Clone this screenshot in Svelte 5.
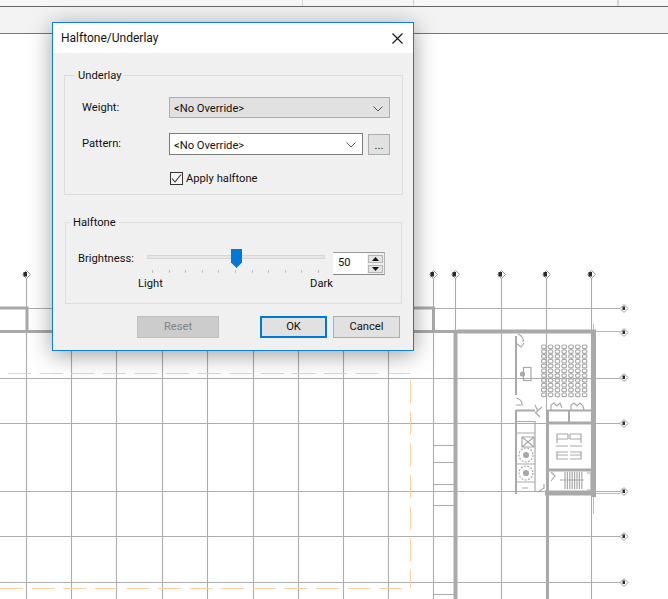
<script>
    // Plan behind the dialog
    const gridX = [26, 71, 116, 162, 207, 253, 298, 343, 388, 433, 455, 501, 546, 591]
    const gridY = [308, 378, 423, 491, 536, 582]
    const topMarks = [26, 433, 455, 501, 546, 591]
    const rightMarks = [308, 332, 377, 423, 491, 536, 582]
    const stairLines = [445, 462, 484, 505, 594]
    const seatCols = [0, 1, 2, 3, 4, 5, 6]
    const seatRows = [0, 1, 2, 3, 4, 5, 6, 7, 8, 9, 10]
    const treads = [0, 1, 2, 3, 4, 5, 6, 7]
    const ticks = Array.from({ length: 11 })
</script>

<div class="app">
    <div class="topbar">
        <div class="columns">
            <span class="col c1"></span>
            <span class="col c2"></span>
            <span class="col c3"></span>
            <span class="col"></span>
        </div>
    </div>

    <svg class="plan" width="668" height="565" viewBox="0 34 668 565" fill="none">
        <g stroke="#adadad" stroke-width="1.1">
            {#each gridX as x}
                <line x1={x + 0.5} y1="278" x2={x + 0.5} y2="599" />
            {/each}
            {#each gridY as y}
                <line x1="0" y1={y + 0.5} x2="620" y2={y + 0.5} />
            {/each}
            {#each stairLines as y}
                <line x1="434" y1={y + 0.5} x2="455" y2={y + 0.5} />
            {/each}
        </g>

        <g stroke="#ffcf9e" stroke-width="1">
            <line x1="8" y1="373.5" x2="410" y2="373.5" stroke-dasharray="23 8.6" />
            <line x1="410.5" y1="380" x2="410.5" y2="588" stroke-dasharray="23 8.6" />
            <line x1="0" y1="588.5" x2="410" y2="588.5" stroke-dasharray="23 8.6" />
        </g>

        <g stroke="#f4a3a3" stroke-width="1">
            <line x1="593" y1="331.5" x2="620" y2="331.5" />
            <line x1="593.5" y1="324" x2="593.5" y2="332" />
            <line x1="595" y1="493.5" x2="620" y2="493.5" />
            <line x1="593.5" y1="495" x2="593.5" y2="514" />
        </g>

        <!-- walls -->
        <g stroke="#a9a9a9">
            <path d="M0 308H27V331.5M0 331.5H458" stroke-width="3" />
            <path d="M414 308H433.5V331" stroke-width="3" />
            <path d="M457 331.5H596" stroke-width="4" />
            <line x1="455.5" y1="332" x2="455.5" y2="599" stroke-width="4" />
            <line x1="593.5" y1="331" x2="593.5" y2="497" stroke-width="5" />
            <line x1="547.5" y1="410" x2="547.5" y2="599" stroke-width="3" />
            <line x1="545" y1="493" x2="596" y2="493" stroke-width="5" />
            <path d="M516 336V395M516 410V494" stroke-width="2" />
            <path d="M516 410.5H535M546 410.5H592" stroke-width="2" />
            <line x1="569" y1="410" x2="569" y2="422" stroke-width="2" />
            <line x1="547" y1="423" x2="592" y2="423" stroke-width="3" />
            <line x1="547" y1="470" x2="592" y2="470" stroke-width="3" />
        </g>

        <!-- auditorium seats -->
        <g stroke="#a9a9a9" stroke-width="1.2">
            {#each seatCols as c}
                {#each seatRows as r}
                    <rect x={541.5 + c * 6.8} y={345 + r * 4.8} width="4.6" height="3.6" rx="1.6" />
                {/each}
            {/each}
            <rect x="523.5" y="367.5" width="7.5" height="13" />
            <circle cx="522.5" cy="374" r="2" fill="#a9a9a9" />
            <path d="M518 334c4 2 6 5 5 8M516 343l5 4 3-4M516 398c4 1 6 3 6 6M516 405h7" />
            <path d="M538 411l-3-6M535 413l7-6M540 417l-4-4" />
            <path d="M551 410l0-5 3-2 3 3 3-3 2 5M571 410l0-5 3-2 3 3 3-3 3 3 1 4" />
            <!-- tables -->
            <path d="M568 434H557V443M557 439H568M568 434V439M570 434H581V443M570 439H581M570 434V439" />
            <path d="M556 446H568M570 446H582M556 452H568M570 452H582" />
            <path d="M568 459H557V452M557 455H568M570 459H581V452M570 455H581" />
            <!-- core -->
            <path d="M516 421.5H535M516 433H535M522 437H534V447H522ZM522 437L534 447M534 437L522 447" />
            <circle cx="526" cy="455" r="7" stroke-dasharray="2 1.4" />
            <circle cx="526" cy="473" r="7" stroke-dasharray="2 1.4" />
            <circle cx="526" cy="455" r="2.5" fill="#a9a9a9" />
            <circle cx="526" cy="473" r="2.5" fill="#a9a9a9" />
            <path d="M516 464H535M516 482H535M535 421V492M538 492l6-4v-4M522 488h6" />
            <!-- stairs -->
            {#each treads as t}
                <line x1={565 + t * 2.4} y1="472" x2={565 + t * 2.4} y2="489" />
            {/each}
            <path d="M560 480H584M587 473H591V490H587M551 472l4 4-4 5" />
        </g>

        <!-- level and grid bubbles -->
        {#each topMarks as x}
            <polygon points="{x + 0.5},270.5 {x + 4.5},274.5 {x + 0.5},278.5 {x - 3.5},274.5" fill="#fff" stroke="#9a9a9a" />
            <rect x={x - 2.5} y="272" width="3.5" height="4.5" fill="#2a2a33" />
        {/each}
        {#each rightMarks as y}
            <polygon points="624,{y - 3.5} 628,{y + 0.5} 624,{y + 4.5} 620,{y + 0.5}" fill="#fff" stroke="#9a9a9a" />
            <rect x="622.5" y={y - 1.5} width="2.5" height="3.5" fill="#2a2a33" />
        {/each}
    </svg>

    <div class="dialog">
        <div class="titlebar">
            <span>Halftone/Underlay</span>
            <svg class="close" width="11" height="11" viewBox="0 0 11 11">
                <path d="M0.5 0.5L10.5 10.5M10.5 0.5L0.5 10.5" stroke="#111" stroke-width="1.1" fill="none" />
            </svg>
        </div>

        <div class="content">
            <div class="group underlay">
                <span class="legend">Underlay</span>
                <div class="row">
                    <span class="label">Weight:</span>
                    <div class="select disabled">
                        <span>&lt;No Override&gt;</span>
                        <svg width="10" height="6" viewBox="0 0 10 6"><path d="M0.5 0.5L5 5L9.5 0.5" /></svg>
                    </div>
                </div>
                <div class="row second">
                    <span class="label">Pattern:</span>
                    <div class="select open">
                        <span>&lt;No Override&gt;</span>
                        <svg width="10" height="6" viewBox="0 0 10 6"><path d="M0.5 0.5L5 5L9.5 0.5" /></svg>
                    </div>
                    <div class="dots">...</div>
                </div>
                <div class="check-row">
                    <span class="checkbox">
                        <svg width="11" height="11" viewBox="0 0 11 11"><path d="M1 5.5L4 9L10 1.5" /></svg>
                    </span>
                    <span class="check-text">Apply halftone</span>
                </div>
            </div>

            <div class="group halftone">
                <span class="legend">Halftone</span>
                <div class="bright-row">
                    <span class="bright-label">Brightness:</span>
                    <div class="slider">
                        <div class="track"></div>
                        <svg class="thumb" width="11" height="19" viewBox="0 0 11 19"><path d="M0 0H11V13.5L5.5 19L0 13.5Z" /></svg>
                        <div class="ticks">
                            {#each ticks as _}
                                <i></i>
                            {/each}
                        </div>
                    </div>
                    <div class="spin">
                        <span class="spin-value">50</span>
                        <div class="spin-btns">
                            <span class="arrow"><svg width="7" height="4" viewBox="0 0 7 4"><path d="M3.5 0L7 4H0Z" /></svg></span>
                            <span class="arrow"><svg width="7" height="4" viewBox="0 0 7 4"><path d="M0 0H7L3.5 4Z" /></svg></span>
                        </div>
                    </div>
                </div>
                <div class="scale">
                    <span>Light</span>
                    <span>Dark</span>
                </div>
            </div>

            <div class="buttons">
                <div class="btn reset">Reset</div>
                <div class="btn ok">OK</div>
                <div class="btn cancel">Cancel</div>
            </div>
        </div>
    </div>
</div>

<style>
    :global(body) {
        background: #fff;
    }

    .app {
        position: relative;
        width: 668px;
        height: 599px;
        overflow: hidden;
        background: #fff;
        font-family: Roboto, Lato, sans-serif;
        font-size: 11.2px;
        color: #111;
    }

    .topbar {
        height: 34px;
        border-bottom: 1px solid #777;
        box-sizing: border-box;
        background: #f3f3f3;
    }

    .columns {
        display: flex;
        height: 6px;
        background: #f7f7f7;
        border-bottom: 1px solid #666;
    }

    .col {
        border-right: 1px solid #d4d4d4;
    }

    .c1 { width: 302px; }
    .c2 { width: 110px; }
    .c3 { width: 203px; }

    .plan {
        position: absolute;
        left: 0;
        top: 34px;
    }

    .dialog {
        position: absolute;
        left: 52px;
        top: 22px;
        width: 362px;
        height: 329px;
        box-sizing: border-box;
        display: flex;
        flex-direction: column;
        background: #f0f0f0;
        border: 1px solid #0f7fd8;
        box-shadow: 0 4px 22px rgba(0, 0, 0, 0.38);
    }

    .titlebar {
        height: 30px;
        flex: none;
        display: flex;
        align-items: center;
        justify-content: space-between;
        padding: 0 10px 0 8px;
        background: #fff;
        font-size: 12px;
    }

    .close {
        flex: none;
    }

    .content {
        flex: 1;
        display: flex;
        flex-direction: column;
        padding: 22px 10px 0 11px;
    }

    .group {
        position: relative;
        box-sizing: border-box;
        border: 1px solid #dcdcdc;
    }

    .legend {
        position: absolute;
        top: -8px;
        left: 10px;
        padding: 0 3px;
        background: #f0f0f0;
        line-height: 15px;
    }

    .halftone .legend {
        left: 4px;
    }

    .underlay {
        height: 120px;
        padding: 21px 12px 0 17px;
    }

    .row {
        display: flex;
        align-items: center;
    }

    .second {
        margin-top: 15px;
    }

    .label {
        width: 87px;
        flex: none;
        margin-top: -1px;
    }

    .select {
        box-sizing: border-box;
        display: flex;
        align-items: center;
        justify-content: space-between;
        padding: 2px 6px 0 4px;
        line-height: 15px;
    }

    .select path {
        fill: none;
        stroke: #555;
    }

    .disabled {
        width: 221px;
        height: 21px;
        background: #e1e1e1;
        border: 1px solid #adadad;
    }

    .open {
        width: 194px;
        height: 22px;
        background: #fff;
        border: 1px solid #7a7a7a;
    }

    .dots {
        width: 22px;
        height: 21px;
        margin-left: 5px;
        box-sizing: border-box;
        background: #e1e1e1;
        border: 1px solid #adadad;
        text-align: center;
        line-height: 21px;
    }

    .check-row {
        display: flex;
        align-items: center;
        gap: 3px;
        margin: 16px 0 0 87px;
        line-height: 14px;
    }

    .check-text {
        padding-top: 1px;
    }

    .checkbox {
        width: 13px;
        height: 13px;
        margin-left: 1px;
        box-sizing: border-box;
        display: flex;
        align-items: center;
        justify-content: center;
        border: 1px solid #333;
        background: #f5f5f5;
    }

    .checkbox path {
        fill: none;
        stroke: #333;
        stroke-width: 1.1;
    }

    .halftone {
        height: 82px;
        margin: 27px 1px 0 1px;
        padding: 27px 0 0 12px;
    }

    .bright-row {
        display: flex;
        align-items: flex-start;
        position: relative;
    }

    .bright-label {
        width: 69px;
        flex: none;
        margin-top: 1px;
        line-height: 15px;
    }

    .slider {
        position: relative;
        width: 178px;
        height: 24px;
        flex: none;
    }

    .track {
        height: 4px;
        margin-top: 5px;
        box-sizing: border-box;
        background: #e7e7e7;
        border: 1px solid #d6d6d6;
    }

    .thumb {
        position: absolute;
        left: 84px;
        top: -1px;
    }

    .thumb path {
        fill: #0078d7;
    }

    .ticks {
        display: flex;
        justify-content: space-between;
        margin: 11px 6px 0 5px;
    }

    .ticks i {
        width: 1px;
        height: 3px;
        background: #bdbdbd;
    }

    .spin {
        display: flex;
        margin: 2px 0 0 8px;
        width: 52px;
        height: 23px;
        box-sizing: border-box;
        border: 1px solid #9c9c9c;
        border-left: 0;
        border-right-color: #b5b5b5;
        border-bottom-color: #8a8a8a;
    }

    .spin-value {
        width: 34px;
        background: #fff;
        padding-left: 5px;
        box-sizing: border-box;
        line-height: 20px;
    }

    .spin-btns {
        flex: 1;
        display: flex;
        flex-direction: column;
        gap: 2px;
        padding: 2px 1px 1px 1px;
        background: #f0f0f0;
    }

    .arrow {
        flex: 1;
        display: flex;
        align-items: center;
        justify-content: center;
        background: #e4e4e4;
        border: 1px solid #b5b5b5;
    }

    .arrow path {
        fill: #111;
    }

    .scale {
        display: flex;
        justify-content: space-between;
        width: 195px;
        margin: 1px 0 0 60px;
        line-height: 15px;
    }

    .buttons {
        display: flex;
        margin: 12px 2px 0 73px;
    }

    .btn {
        box-sizing: border-box;
        height: 22px;
        text-align: center;
        line-height: 20px;
        background: #e1e1e1;
        border: 1px solid #adadad;
    }

    .reset {
        width: 82px;
        background: #cccccc;
        border-color: #bfbfbf;
        color: #838383;
    }

    .ok {
        width: 67px;
        margin-left: 41px;
        border: 2px solid #0078d7;
        line-height: 18px;
    }

    .cancel {
        width: 67px;
        margin-left: 6px;
    }
</style>
